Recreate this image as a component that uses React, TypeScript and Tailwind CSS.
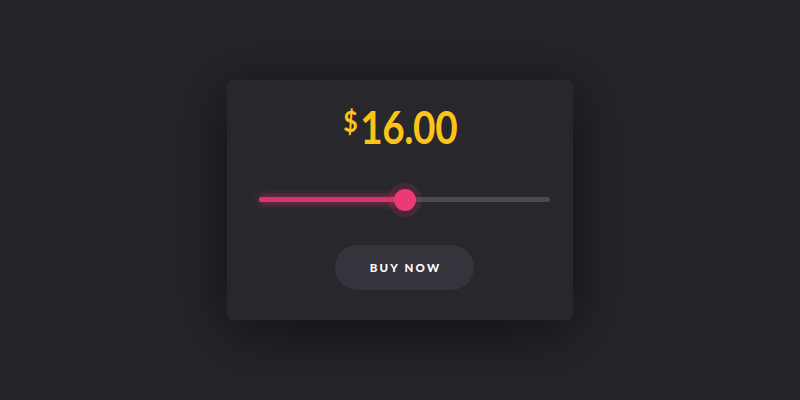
import React, { useState } from 'react';

const App: React.FC = () => {
  const [value] = useState(50);

  return (
    <div
      className="w-[800px] h-[400px] bg-[#252429] flex items-center justify-center"
      style={{ fontFamily: '"Lato", "Noto Sans", sans-serif' }}
    >
      <div className="w-[346px] h-[240px] bg-[#28272c] rounded-md shadow-[0_10px_60px_rgba(0,0,0,0.55)] flex flex-col items-center pt-[21px]">
        {/* Price */}
        <div className="flex items-start text-[#fcc419] font-bold leading-none h-[52px] scale-x-[0.86]">
          <span className="text-[29px] mt-[5px] mr-[3px]">$</span>
          <span className="text-[45px] mt-[4px] tracking-[-0.5px]">16.00</span>
        </div>

        {/* Slider */}
        <div className="relative w-[291px] h-[5px] mt-[44px] ml-[9px] rounded-full bg-[#4a494f]">
          <div
            className="absolute left-0 top-0 h-full rounded-full bg-[#d8336a] shadow-[0_0_8px_rgba(232,52,110,0.8)]"
            style={{ width: `${value}%` }}
          />
          <div
            className="absolute top-1/2 w-[34px] h-[34px] -translate-x-1/2 -translate-y-1/2 rounded-full bg-[rgba(232,52,110,0.16)] flex items-center justify-center"
            style={{ left: `${value}%` }}
          >
            <div className="w-[22px] h-[22px] rounded-full bg-[#ec3a74]" />
          </div>
        </div>

        {/* Button */}
        <button className="mt-[43px] ml-[9px] w-[139px] h-[45px] rounded-full bg-[#35343d] text-white text-[11.5px] font-black tracking-[2.2px] pl-[2px]">
          BUY NOW
        </button>
      </div>
    </div>
  );
};

export default App;
